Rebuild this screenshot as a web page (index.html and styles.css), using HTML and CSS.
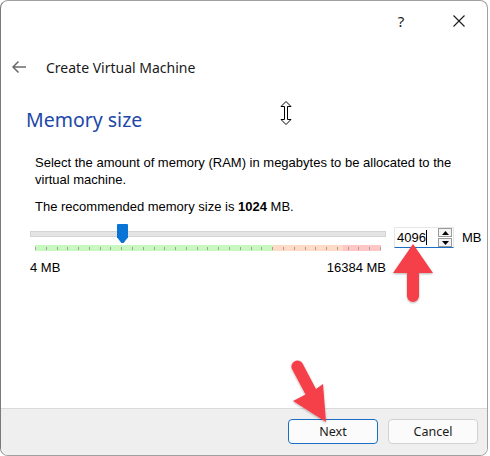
FILE: index.html
```html
<!DOCTYPE html>
<html>
<head>
<meta charset="utf-8">
<link rel="stylesheet" href="styles.css">
</head>
<body>
<div class="window">
  <div class="titlebar">
    <span class="help">?</span>
    <span class="close">
      <svg width="12" height="12" viewBox="0 0 12 12"><path d="M0.5 0.5 L11.5 11.5 M11.5 0.5 L0.5 11.5" stroke="#1a1a1a" stroke-width="1.1" fill="none"/></svg>
    </span>
  </div>
  <div class="header">
    <svg class="back" width="16" height="14" viewBox="0 0 16 14"><path d="M15 7 H2 M7.5 1.5 L2 7 L7.5 12.5" stroke="#6b6b6b" stroke-width="1.5" fill="none"/></svg>
    <span class="header-title">Create Virtual Machine</span>
  </div>
  <div class="content">
    <h1 class="page-title">Memory size</h1>
    <p class="desc">Select the amount of memory (RAM) in megabytes to be allocated to the virtual machine.</p>
    <p class="desc rec">The recommended memory size is <b>1024</b> MB.</p>
    <div class="slider-row">
      <div class="slider">
        <div class="track"><div class="handle"></div></div>
        <div class="scale"></div>
        <div class="labels"><span>4 MB</span><span>16384 MB</span></div>
      </div>
      <div class="spin">
        <span class="spin-value">4096<span class="caret"></span></span>
        <span class="spin-btns">
          <span class="spin-btn"><svg width="7" height="4" viewBox="0 0 7 4"><path d="M0 4 L3.5 0 L7 4 Z" fill="#000"/></svg></span>
          <span class="spin-btn"><svg width="7" height="4" viewBox="0 0 7 4"><path d="M0 0 L3.5 4 L7 0 Z" fill="#000"/></svg></span>
        </span>
      </div>
      <span class="unit">MB</span>
    </div>
  </div>
  <div class="footer">
    <button class="btn btn-default">Next</button>
    <button class="btn">Cancel</button>
  </div>
</div>
<svg class="cursor" width="12" height="24" viewBox="0 0 12 24"><path d="M6 0.5 L11 5.5 L7.5 5.5 L7.5 18.5 L11 18.5 L6 23.5 L1 18.5 L4.5 18.5 L4.5 5.5 L1 5.5 Z" fill="#fff" stroke="#000" stroke-width="1"/></svg>
<svg class="arrows" width="490" height="456" viewBox="0 0 490 456">
  <defs>
    <filter id="sh" x="-20%" y="-20%" width="140%" height="140%"><feDropShadow dx="0" dy="1" stdDeviation="1" flood-color="#000" flood-opacity="0.3"/></filter>
  </defs>
  <g fill="#f5414a" filter="url(#sh)">
    <path d="M413 244 L433 273 L419 273 L419 296 A6 6 0 0 1 407 296 L407 273 L393 273 Z"/>
    <path d="M326 422 L293 401 L305.5 394.5 L292 369 A6 6 0 0 1 302.6 363.4 L316 389 L323 384 Z"/>
  </g>
</svg>
</body>
</html>
```
FILE: styles.css
```css
* { box-sizing: border-box; }
html, body { margin: 0; padding: 0; background: #fff; }
body {
  width: 490px;
  height: 456px;
  overflow: hidden;
  position: relative;
  font-family: "Liberation Sans", Arial, sans-serif;
  color: #000;
}
.window {
  width: 488px;
  height: 456px;
  border: 1px solid #a0a0a0;
  border-left-color: #7a7a7a;
  border-radius: 8px;
  background: #fff;
  display: flex;
  flex-direction: column;
  position: relative;
  overflow: hidden;
}
.window::before {
  content: "";
  position: absolute;
  top: -1px;
  left: 3px;
  width: 80px;
  height: 1px;
  background: #1a7fd4;
}
.titlebar {
  height: 40px;
  display: flex;
  justify-content: flex-end;
  align-items: center;
}
.help {
  font-family: "Noto Sans", "Open Sans", sans-serif;
  font-size: 15px;
  color: #1a1a1a;
  width: 12px;
  text-align: center;
  margin-right: 46px;
}
.close {
  width: 12px;
  height: 12px;
  margin-right: 22px;
  display: flex;
}
.header {
  height: 56px;
  display: flex;
  align-items: center;
  padding-left: 10px;
  padding-bottom: 4px;
}
.back { margin-right: 19px; }
.header-title {
  font-family: "Noto Sans", "Open Sans", sans-serif;
  font-size: 14px;
  color: #1a1a1a;
}
.content {
  flex: 1;
  padding: 0 0 0 25px;
}
.page-title {
  margin: 9px 0 0 0;
  font-family: "Noto Sans", "Open Sans", sans-serif;
  font-weight: normal;
  font-size: 19.5px;
  color: #2147a8;
  line-height: 28px;
}
.desc {
  margin: 20px 0 0 9px;
  font-size: 13px;
  line-height: 17px;
  width: 440px;
}
.desc.rec { margin-top: 10px; }
.slider-row {
  display: flex;
  align-items: flex-start;
  margin-top: 9px;
}
.slider {
  width: 356px;
  margin-left: 4px;
}
.track {
  position: relative;
  height: 6px;
  margin-top: 7px;
  background: #e4e4e4;
  border: 1px solid #d4d4d4;
}
.handle {
  position: absolute;
  left: 86px;
  top: -8px;
  width: 11px;
  height: 19px;
  background: #0a74d6;
  clip-path: polygon(0 0, 100% 0, 100% 70%, 60% 100%, 40% 100%, 0 70%);
  border-radius: 1px;
}
.scale {
  margin: 8px 5px 0 5px;
  height: 6px;
  background:
    repeating-linear-gradient(to right, #a69c92 0 1px, transparent 1px 10.78px) 0 50% / 100% 3px no-repeat,
    linear-gradient(to right, #c6f8c0 0 68.7%, #ffdac6 68.7% 89%, #ffc6c6 89% 100%);
}
.labels {
  display: flex;
  justify-content: space-between;
  margin-top: 9px;
  font-size: 13px;
}
.spin {
  margin-left: 8px;
  margin-top: 3px;
  width: 60px;
  height: 21px;
  border: 1px solid #e6e6e6;
  border-bottom: 1px solid #1a6fc4;
  display: flex;
  align-items: center;
  justify-content: space-between;
  padding-left: 2px;
  padding-right: 1px;
}
.spin-value {
  font-size: 13px;
  display: flex;
  align-items: center;
}
.caret {
  display: inline-block;
  width: 1px;
  height: 15px;
  background: #000;
}
.spin-btns {
  display: flex;
  flex-direction: column;
  gap: 1px;
}
.spin-btn {
  width: 14px;
  height: 9px;
  border: 1px solid #9a9a9a;
  background: #f4f4f4;
  display: flex;
  align-items: center;
  justify-content: center;
}
.unit {
  margin-left: 8px;
  margin-top: 3px;
  font-size: 13px;
  line-height: 21px;
}
.footer {
  height: 47px;
  border-top: 1px solid #dadada;
  background: #efefef;
  display: flex;
  justify-content: flex-end;
  align-items: center;
  gap: 10px;
  padding-right: 9px;
  padding-bottom: 2px;
}
.btn {
  width: 90px;
  height: 25px;
  border: 1px solid #d2d2d2;
  border-radius: 4px;
  background: #fbfbfb;
  font-family: "Noto Sans", "Open Sans", sans-serif;
  font-size: 12.5px;
  color: #1a1a1a;
  padding: 0;
}
.btn-default {
  border-color: #1a6fc4;
}
.cursor {
  position: absolute;
  left: 280px;
  top: 101px;
}
.arrows {
  position: absolute;
  left: 0;
  top: 0;
  pointer-events: none;
}
```
